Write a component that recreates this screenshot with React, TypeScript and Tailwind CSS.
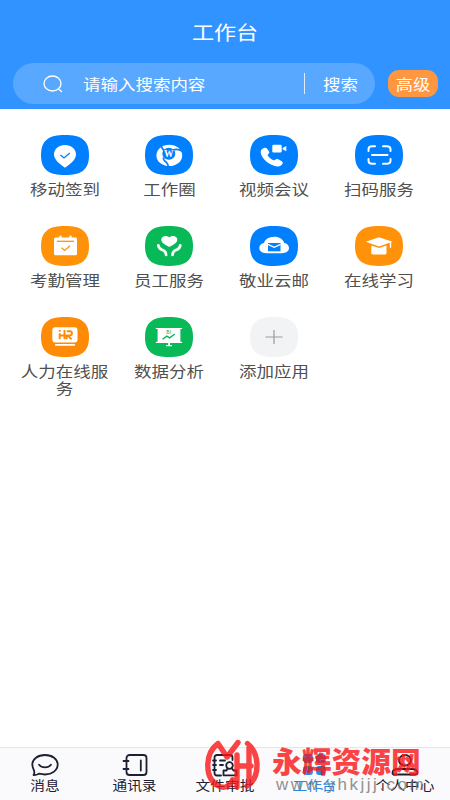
import React from 'react';

type App = {
  name: string[];
  color: string;
  icon: React.ReactNode;
};

// Rounded tile behind every app icon
const TILE = 'M24 0C40 0 48 5 48 20S40 40 24 40S0 35 0 20S8 0 24 0Z';

const APPS: App[] = [
  {
    name: ['移动签到'],
    color: '#007fff',
    icon: (
      <>
        <path d="M24 32.7c-3.2-2.7-11-7.2-11-13.3C13 14 17.800 10 24 10s11 4 11 9.400c0 6.100-7.800 10.600-11 13.300Z" fill="#fff" />
        <path d="m19.500 20 3.500 3 5.800-5" fill="none" stroke="#007fff" strokeWidth="1.300" />
      </>
    ),
  },
  {
    name: ['工作圈'],
    color: '#007fff',
    icon: (
      <>
        <ellipse cx="24.300" cy="20.400" rx="12.900" ry="10.700" fill="#fff" />
        <ellipse cx="23.800" cy="18.800" rx="6.500" ry="6" fill="#007fff" />
        <path d="M15.500 10.500l4 6M28 15c3-1.200 6-.8 9.500 1.200M18.500 22.500c-.5 2.500 1 3.500 2.500 4.500s1.500 2.500 2.500 4.500" fill="none" stroke="#007fff" strokeWidth="1.700" />
        <text x="23.800" y="22" textAnchor="middle" fontSize="9.500" fontWeight="700" fontFamily="Liberation Serif, serif" fill="#fff">W</text>
      </>
    ),
  },
  {
    name: ['视频会议'],
    color: '#007fff',
    icon: (
      <>
        <path d="M11.800 14.200c1.700-1.700 4-2.200 5.200-.6l2 3c.8 1.400-.2 2.300-1.500 3.400 1.300 2.300 3.700 4.400 6.500 5.600 1.400-1.200 2.600-2.200 4.200-1.400l3.600 2c1.600 1 1.200 2.800-.8 4.200-1.300 1-3.200 1.200-5 .8-7-1.500-13-6.500-14.900-12-.6-1.800-.6-3.700.7-5Z" fill="#fff" />
        <rect x="22.300" y="9.800" width="9.400" height="7.600" rx="1.200" fill="#fff" />
        <path d="m32.600 13 3.700-2v5.300l-3.700-2Z" fill="#fff" />
      </>
    ),
  },
  {
    name: ['扫码服务'],
    color: '#007fff',
    icon: (
      <g fill="none" stroke="#fff" strokeWidth="2" strokeLinecap="round">
        <path d="M13.500 16v-1.700c0-1.900 1.500-3 3.500-3H20M28 11.300h3.500c2.200 0 4 1.100 4 3V16M13.500 24v1.700c0 1.900 1.500 3 3.500 3H20M28 28.700h3.500c2.200 0 4-1.100 4-3V24M17 20h15.500" />
      </g>
    ),
  },
  {
    name: ['考勤管理'],
    color: '#ff9208',
    icon: (
      <>
        <rect x="13" y="11.600" width="23" height="17.600" rx="1.500" fill="#fff" />
        <path d="M19.500 11.800v-1.200M29.500 11.800v-1.200" stroke="#fff" strokeWidth="2.400" strokeLinecap="round" />
        <path d="M16 15.300h17" stroke="#ff9208" strokeWidth="1.300" />
        <path d="m20.500 21.700 3.200 2.800 5.300-4.700" fill="none" stroke="#ff9208" strokeWidth="1.300" />
      </>
    ),
  },
  {
    name: ['员工服务'],
    color: '#07b957',
    icon: (
      <>
        <path d="M24.300 21c-3.500-2-8-4.200-8-7.300 0-4 5.500-4.900 8-2.200 2.500-2.700 8-1.800 8 2.200 0 3.100-4.500 5.300-8 7.300Z" fill="#fff" />
        <path d="M13.300 19.300c.8 4.200 2.200 3.800 4.900 5 2.200 1 2.700 2 2.900 4.500M35.300 19.300c-.8 4.200-2.200 3.800-4.900 5-2.200 1-2.700 2-2.900 4.500" fill="none" stroke="#fff" strokeWidth="2.700" strokeLinecap="round" />
      </>
    ),
  },
  {
    name: ['敬业云邮'],
    color: '#007fff',
    icon: (
      <>
        <path d="M16.500 27.300c-4.200 0-7.200-2-7.200-5.200 0-2.800 1.800-4.600 4.700-5.100.8-3.500 5-6.300 10.200-6.300s9.100 2.600 10 6.300c3 .5 4.800 2.300 4.800 5.100 0 3.200-3 5.200-7.200 5.200Z" fill="#fff" />
        <rect x="18" y="17" width="12.500" height="8.300" fill="#007fff" />
        <path d="m18 18.300 6.200 3 6.300-3" fill="none" stroke="#fff" strokeWidth="1.300" />
      </>
    ),
  },
  {
    name: ['在线学习'],
    color: '#ff9208',
    icon: (
      <>
        <path d="m24 11.300 13.500 4.500L24 20.500l-13.200-4.700Z" fill="#fff" />
        <path d="M16.300 19.400 24 22.100l7.500-2.700v7.400c0 1-.6 1.700-1.700 1.700H18c-1.100 0-1.700-.7-1.700-1.700Z" fill="#fff" />
        <path d="M35.500 16v5.200" stroke="#fff" strokeWidth="1.400" strokeLinecap="round" />
      </>
    ),
  },
  {
    name: ['人力在线服', '务'],
    color: '#ff8a05',
    icon: (
      <>
        <rect x="11.300" y="10.200" width="25.200" height="15.300" rx="3" fill="#fff" />
        <path d="M14.800 27.800h18.500" stroke="#fff" strokeWidth="1.800" strokeLinecap="round" />
        <path d="M18.700 16.300v6M18.700 13v1.800M18.700 18.500h6M23.500 13v9.300M25.700 14.200H29c2.600 0 2.600 4.200 0 4.200h-3.300v3.900M27 18.500l3.500 3.800" fill="none" stroke="#ff8a05" strokeWidth="1.900" />
      </>
    ),
  },
  {
    name: ['数据分析'],
    color: '#07b957',
    icon: (
      <>
        <path d="M11.300 11.500h25.400M11.300 25.300h25.400" stroke="#fff" strokeWidth="1.200" strokeLinecap="round" />
        <path d="M12.600 11.500h22.800v13.800H12.600ZM23.200 25h1.800v3h2v1.200h-6V28h2.200Z" fill="#fff" />
        <path d="m17.500 22.200 4.300-3.100 2.800 1.700 5.200-3.800" fill="none" stroke="#07b957" strokeWidth="1.400" />
        <text x="23.700" y="16.900" textAnchor="middle" fontSize="5" fontFamily="Liberation Sans, sans-serif" fill="#07b957">BI</text>
      </>
    ),
  },
  {
    name: ['添加应用'],
    color: '#f2f3f5',
    icon: <path d="M15.500 20h17M24 13v14" stroke="#999b9e" strokeWidth="1.200" />,
  },
];

const AppItem: React.FC<{ app: App }> = ({ app }) => (
  <div className="flex h-[91px] flex-col items-center">
    <svg className="h-10 w-12 shrink-0" viewBox="0 0 48 40">
      <path d={TILE} fill={app.color} />
      {app.icon}
    </svg>
    <div className="mt-[5px] scale-x-[1.165] text-center text-[15px] leading-[17px] whitespace-nowrap text-[#505050]">
      {app.name.map(line => (
        <div key={line}>{line}</div>
      ))}
    </div>
  </div>
);

const TABS = [
  {
    name: '消息',
    color: 'text-[#1d2033]',
    icon: (
      <>
        <path d="M3.500 22c1.200-1.500 1-3 .5-4.500-1-2-1.700-3.800-1.700-5.900C2.300 6 7.800 2 15 2s12.700 4 12.700 9.600S22.200 21.500 15 21.500c-2.500 0-4.300-.4-6-.8-1.800.9-3.200 1.500-5.500 1.300Z" />
        <path d="M9 11.700c2.800 3.500 9.200 3.500 12 0" />
      </>
    ),
  },
  {
    name: '通讯录',
    color: 'text-[#1d2033]',
    icon: (
      <>
        <rect x="6.500" y="2" width="20" height="20" rx="3" />
        <path d="M3.500 8h5M3.500 16h5M20.800 7.500v10" />
      </>
    ),
  },
  {
    name: '文件审批',
    color: 'text-[#1d2033]',
    icon: (
      <>
        <path d="M11 22.500H7c-1.500 0-2.500-1-2.500-2.500V4.500C4.500 3 5.500 2 7 2h13c1.500 0 2.500 1 2.500 2.500V7M3 7.500h3M3 12h3M3 17h3M10 7.500h5M10 12h3" />
        <circle cx="19.500" cy="12.500" r="3.300" />
        <path d="M17.500 15.500 16.500 17.500h-3v4.800h13v-4.800h-3l-1.500-2" />
      </>
    ),
  },
  {
    name: '工作台',
    color: 'text-[#268be8]',
    icon: (
      <g fill="currentColor">
        <rect x="4" y="2" width="8" height="7" rx="2" />
        <rect x="17" y="2" width="8" height="7" rx="2" />
        <rect x="4" y="14" width="8" height="7" rx="2" />
        <rect x="17" y="14" width="8" height="7" rx="2" />
      </g>
    ),
  },
  {
    name: '个人中心',
    color: 'text-[#1d2033]',
    icon: (
      <>
        <ellipse cx="15" cy="7.300" rx="6" ry="5.300" />
        <path d="M2.500 20c0-2.800 3-4 6-4h13c3 0 6 1.200 6 4 0 1-.7 1.500-1.800 1.500H4.300c-1.100 0-1.800-.5-1.800-1.500Z" />
      </>
    ),
  },
];

const Watermark: React.FC = () => (
  <div className="pointer-events-none absolute top-[739px] left-[203px] flex h-[61px] w-[247px] opacity-80">
    <svg className="h-[56px] w-[58px] shrink-0" viewBox="0 0 58 56" fill="none" stroke="#f91617" strokeWidth="5.400" strokeLinecap="round" strokeLinejoin="round">
      <path d="M15 4.500C9 9 4.800 16 4.800 26.500c0 10.500 4.500 18 12.700 21.300 5 1.700 10-1.500 12-7M15 4.500l9 13.500L35 3.500M34 16v32M34 27h14M44.500 4.500C50 9 54 17 54 26.500c0 9-3.500 16.500-10 20.500M46 8v36" />
    </svg>
    <div className="pt-[3px] pl-[11px]">
      <div className="origin-left scale-x-[1.025] text-[29px] leading-[36px] font-black whitespace-nowrap text-[#f91617]">永辉资源网</div>
      <div className="-mt-1 pl-1 font-['Liberation_Sans',sans-serif] text-[17px] leading-[22px] tracking-[2.500px] whitespace-nowrap text-[#777]">www.yhkjjj.com</div>
    </div>
  </div>
);

const App: React.FC = () => {
  return (
    <div className="relative flex h-[800px] w-[450px] flex-col overflow-hidden bg-white font-['Noto_Sans_CJK_SC',sans-serif]">
      <header className="h-[109px] shrink-0 bg-[#3093ff] text-white">
        <h1 className="flex h-[63px] scale-x-[1.16] items-center justify-center text-[19px] leading-none">工作台</h1>
        <div className="flex items-center pl-[13px]">
          <div className="flex h-[41px] w-[362px] items-center rounded-full bg-[#58a8ff] pl-[30px]">
            <svg className="h-[18px] w-5" viewBox="0 0 20 18" fill="none" stroke="#fff" strokeWidth="1.300" strokeLinecap="round">
              <ellipse cx="9.500" cy="8.500" rx="8.500" ry="7.500" />
              <path d="m15.500 14 3 2.500" />
            </svg>
            <span className="ml-5 w-[222px] origin-left scale-x-[1.165] text-[15px] leading-none">请输入搜索内容</span>
            <span className="-ml-[1px] h-[21px] w-px bg-white/80" />
            <span className="ml-[18px] origin-left scale-x-[1.165] text-[15px] leading-none whitespace-nowrap">搜索</span>
          </div>
          <button className="ml-[13px] flex h-[27px] w-[50px] items-center justify-center rounded-[11px] bg-[#ff9740] text-[15px] leading-none">
            <span className="scale-x-[1.15] whitespace-nowrap">高级</span>
          </button>
        </div>
      </header>

      <main className="grid w-[431px] flex-1 grid-cols-4 content-start pt-[26px] pl-[12.500px]">
        {APPS.map(app => (
          <AppItem key={app.name[0]} app={app} />
        ))}
      </main>

      <nav className="grid h-[53px] shrink-0 grid-cols-5 border-t border-[#e5e5e7] bg-[#fafafc]">
        {TABS.map(tab => (
          <div key={tab.name} className={`flex flex-col items-center pt-[5px] ${tab.color}`}>
            <svg className="h-6 w-[30px] shrink-0" viewBox="0 0 30 24" fill="none" stroke="currentColor" strokeWidth="1.800" strokeLinecap="round" strokeLinejoin="round">
              {tab.icon}
            </svg>
            <span className="-mt-px scale-x-[1.13] text-[13px] leading-[18px] whitespace-nowrap">{tab.name}</span>
          </div>
        ))}
      </nav>

      <Watermark />
    </div>
  );
};

export default App;
